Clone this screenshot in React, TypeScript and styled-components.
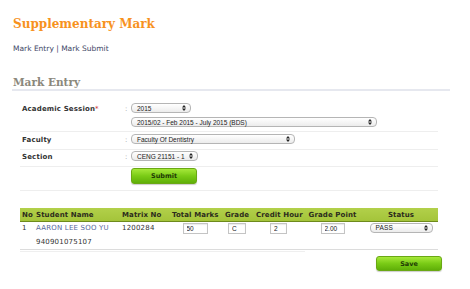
import React from "react";
import styled, { createGlobalStyle } from "styled-components";

const GlobalStyle = createGlobalStyle`
  body {
    margin: 0;
    background: #fff;
    font-family: "DejaVu Sans", Verdana, sans-serif;
    color: #333;
  }
`;

const Arrows = () => (
  <svg width="4" height="6" viewBox="0 0 4 6">
    <path d="M2 0 L4 2.4 L0 2.4 Z" fill="#222" />
    <path d="M2 6 L4 3.6 L0 3.6 Z" fill="#222" />
  </svg>
);

const App = () => {
  return (
    <Page>
      <GlobalStyle />
      <Title>Supplementary Mark</Title>
      <SubNav>
        <NavLink>Mark Entry</NavLink> | <NavLink>Mark Submit</NavLink>
      </SubNav>
      <SectionHeading>Mark Entry</SectionHeading>

      <Form>
        <FormRow $pad="12px 0 4px">
          <Label>
            Academic Session<Req>*</Req>
          </Label>
          <Colon>:</Colon>
          <Fields>
            <Select $w={60}>
              <span>2015</span>
              <Arrows />
            </Select>
            <Select $w={246}>
              <span>2015/02 - Feb 2015 - July 2015 (BDS)</span>
              <Arrows />
            </Select>
          </Fields>
        </FormRow>
        <FormRow $pad="2px 0 4px">
          <Label>Faculty</Label>
          <Colon>:</Colon>
          <Fields>
            <Select $w={164}>
              <span>Faculty Of Dentistry</span>
              <Arrows />
            </Select>
          </Fields>
        </FormRow>
        <FormRow $pad="1px 0 4px">
          <Label>Section</Label>
          <Colon>:</Colon>
          <Fields>
            <Select $w={67}>
              <span>CENG 21151 - 1</span>
              <Arrows />
            </Select>
          </Fields>
        </FormRow>
        <FormRow $pad="1px 0 6px">
          <span />
          <span />
          <Fields>
            <GreenButton $w={66} $h={16}>Submit</GreenButton>
          </Fields>
        </FormRow>
      </Form>

      <Table>
        <colgroup>
          <col style={{ width: 14 }} />
          <col style={{ width: 86 }} />
          <col style={{ width: 50 }} />
          <col style={{ width: 48 }} />
          <col style={{ width: 36 }} />
          <col style={{ width: 47 }} />
          <col style={{ width: 61 }} />
          <col style={{ width: 76 }} />
        </colgroup>
        <thead>
          <tr>
            <Th>No</Th>
            <Th>Student Name</Th>
            <Th>Matrix No</Th>
            <Th $center>Total Marks</Th>
            <Th $center>Grade</Th>
            <Th $center>Credit Hour</Th>
            <Th $center>Grade Point</Th>
            <Th $center>Status</Th>
          </tr>
        </thead>
        <tbody>
          <tr>
            <Td>1</Td>
            <Td>
              <StudentLink>AARON LEE SOO YU</StudentLink>
              <div>940901075107</div>
            </Td>
            <Td>1200284</Td>
            <Td $center>
              <Cell>
                <TextInput $w={25} defaultValue="50" />
              </Cell>
            </Td>
            <Td $center>
              <Cell>
                <TextInput $w={18} defaultValue="C" />
              </Cell>
            </Td>
            <Td $center>
              <Cell>
                <TextInput $w={17} defaultValue="2" />
              </Cell>
            </Td>
            <Td $center>
              <Cell>
                <TextInput $w={24} defaultValue="2.00" />
              </Cell>
            </Td>
            <Td $center>
              <Cell>
                <Select $w={63}>
                  <span>PASS</span>
                  <Arrows />
                </Select>
              </Cell>
            </Td>
          </tr>
        </tbody>
      </Table>
      <UnderRule />

      <Actions>
        <GreenButton $w={66} $h={15}>Save</GreenButton>
      </Actions>
    </Page>
  );
};

export default App;

// Styled Components
const Page = styled.div`
  width: 470px;
  height: 289px;
  overflow: hidden;
  padding-top: 16px;
  box-sizing: border-box;
`;

const Title = styled.h1`
  margin: 0 0 0 13px;
  font-family: "DejaVu Serif", Georgia, serif;
  font-size: 12px;
  line-height: 17px;
  font-weight: bold;
  color: #f7921e;
`;

const SubNav = styled.div`
  margin: 11px 0 0 13px;
  font-size: 7.5px;
  line-height: 10px;
  color: #3e4766;
`;

const NavLink = styled.span`
  color: #3e4766;
`;

const SectionHeading = styled.h2`
  margin: 22px 20px 0 12px;
  padding: 0 0 0 1px;
  font-family: "DejaVu Serif", Georgia, serif;
  font-size: 10.5px;
  line-height: 13px;
  font-weight: bold;
  color: #8b887c;
  border-bottom: 2px solid #e6e8ef;
`;

const Form = styled.div`
  margin: 0 32px 0 20px;
`;

const FormRow = styled.div<{ $pad: string }>`
  display: grid;
  grid-template-columns: 105px 6px 1fr;
  align-items: start;
  padding: ${(p) => p.$pad};
  border-bottom: 1px solid #eeeeee;
`;

const Label = styled.div`
  padding: 1px 0 0 2px;
  font-size: 7px;
  font-weight: bold;
  line-height: 10px;
  color: #333;
  letter-spacing: 0.15px;
`;

const Req = styled.span`
  color: #d0312d;
  font-weight: normal;
`;

const Colon = styled.div`
  padding-top: 1px;
  font-size: 7px;
  line-height: 10px;
  color: #999;
`;

const Fields = styled.div`
  display: flex;
  flex-direction: column;
  align-items: flex-start;
  gap: 4px;
`;

const Select = styled.div<{ $w: number }>`
  width: ${(p) => p.$w}px;
  height: 10px;
  box-sizing: border-box;
  display: flex;
  align-items: center;
  justify-content: space-between;
  padding: 0 4px 0 5px;
  border: 1px solid #b5b5b5;
  border-radius: 4px;
  background: linear-gradient(#ffffff, #ececec);
  font-family: "Liberation Sans", Arial, sans-serif;
  font-size: 6.5px;
  color: #222;
  white-space: nowrap;
  text-align: left;
`;

const GreenButton = styled.div<{ $w: number; $h: number }>`
  width: ${(p) => p.$w}px;
  height: ${(p) => p.$h}px;
  box-sizing: border-box;
  display: flex;
  align-items: center;
  justify-content: center;
  border: 1px solid #6aa814;
  border-radius: 3px;
  background: linear-gradient(#a6e83a, #7acb16 50%, #5faf08);
  box-shadow: 0 1px 1px rgba(0, 0, 0, 0.2);
  font-size: 6.5px;
  font-weight: bold;
  color: #1f3a05;
`;

const Table = styled.table`
  margin: 17px 0 0 20px;
  width: 418px;
  table-layout: fixed;
  border-collapse: collapse;
`;

const Th = styled.th<{ $center?: boolean }>`
  height: 13px;
  padding: 0 0 0 2px;
  background: linear-gradient(#b2d04a, #a4c43a);
  border-bottom: 1px solid #6e8a1c;
  font-size: 7px;
  font-weight: bold;
  color: #2c2c1c;
  text-align: ${(p) => (p.$center ? "center" : "left")};
  white-space: nowrap;
  letter-spacing: 0.1px;
`;

const Td = styled.td<{ $center?: boolean }>`
  padding: 0 0 0 2px;
  vertical-align: top;
  font-size: 7px;
  line-height: 13.5px;
  color: #333;
  text-align: ${(p) => (p.$center ? "center" : "left")};
  border-bottom: 1px solid #dcdcdc;
  white-space: nowrap;
  letter-spacing: 0.2px;
`;

const Cell = styled.div`
  display: flex;
  justify-content: center;
  padding-top: 1px;
`;

const StudentLink = styled.div`
  color: #56689c;
`;

const TextInput = styled.input<{ $w: number }>`
  width: ${(p) => p.$w}px;
  height: 11px;
  box-sizing: border-box;
  padding: 0 3px;
  border: 1px solid #c4c4c4;
  box-shadow: inset 0 1px 1px rgba(0, 0, 0, 0.08);
  font-family: "Liberation Sans", Arial, sans-serif;
  font-size: 6.5px;
  color: #222;
  outline: none;
`;

const UnderRule = styled.div`
  margin: 1px 0 0 20px;
  width: 285px;
  height: 1px;
  background: #efefef;
`;

const Actions = styled.div`
  display: flex;
  justify-content: flex-end;
  margin: 4px 28px 0 0;
`;
